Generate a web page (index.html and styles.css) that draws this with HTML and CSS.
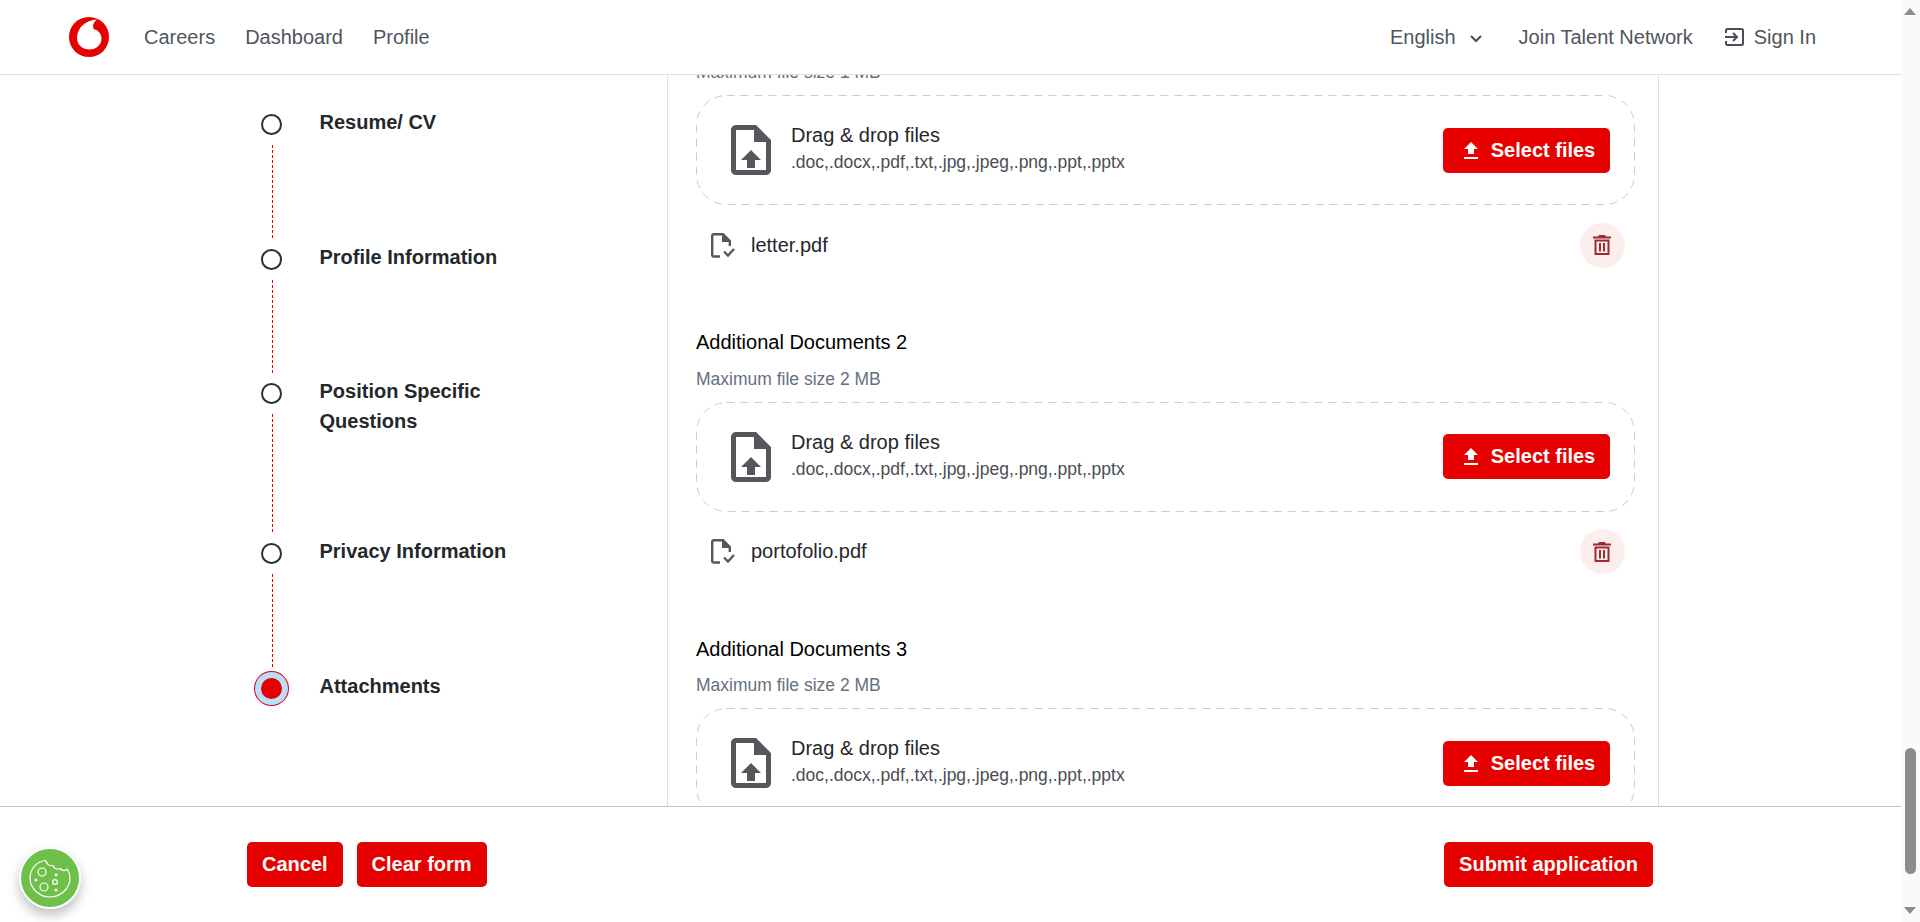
FILE: index.html
```html
<!DOCTYPE html>
<html>

<head>
    <title>Careers - Application</title>
    <link rel="stylesheet" href="styles.css">
</head>

<body>
    <div class="window">
        <div class="page">
            <header class="topbar">
                <svg class="logo" viewBox="0 0 40 40">
                    <circle cx="20" cy="20" r="20" fill="#e60000" />
                    <path fill="#fff" d="M28 2.6C16.5 3.2 8 11 8 21C8 27.8 13.5 32.5 20.5 32.5C27.3 32.5 32.5 27.8 32.5 21.5C32.5 16.5 29 13 25 12.3C23 9.5 24.5 5 28 2.6Z" />
                </svg>
                <nav class="nav">
                    <a href="#">Careers</a>
                    <a href="#">Dashboard</a>
                    <a href="#">Profile</a>
                </nav>
                <div class="nav nav-right">
                    <a href="#" class="lang">English
                        <svg class="chevron" viewBox="0 0 14 9">
                            <path d="M2 2l5 5 5-5" fill="none" stroke="#4a4d55" stroke-width="2" />
                        </svg>
                    </a>
                    <a href="#">Join Talent Network</a>
                    <a href="#" class="signin">
                        <svg class="signin-icon" viewBox="0 0 20 18">
                            <path d="M2 5V2.5C2 1.7 2.7 1 3.5 1H17.5C18.3 1 19 1.7 19 2.5V15.5C19 16.3 18.3 17 17.5 17H3.5C2.7 17 2 16.3 2 15.5V13" fill="none" stroke="#4a4d55" stroke-width="2" />
                            <path d="M1 9H13M9 5l4 4-4 4" fill="none" stroke="#4a4d55" stroke-width="2" />
                        </svg>
                        Sign In
                    </a>
                </div>
            </header>

            <main class="content">
                <ol class="stepper">
                    <li class="step">
                        <div class="track"><span class="dot"></span><span class="line"></span></div>
                        <div class="step-label">Resume/ CV</div>
                    </li>
                    <li class="step">
                        <div class="track"><span class="dot"></span><span class="line"></span></div>
                        <div class="step-label">Profile Information</div>
                    </li>
                    <li class="step step-tall">
                        <div class="track"><span class="dot"></span><span class="line"></span></div>
                        <div class="step-label">Position Specific<br>Questions</div>
                    </li>
                    <li class="step">
                        <div class="track"><span class="dot"></span><span class="line"></span></div>
                        <div class="step-label">Privacy Information</div>
                    </li>
                    <li class="step step-last">
                        <div class="track"><span class="dot dot-active"></span></div>
                        <div class="step-label">Attachments</div>
                    </li>
                </ol>

                <form class="form">
                    <section class="doc doc-first">
                        <div class="hint">Maximum file size 1 MB</div>
                        <div class="dropzone">
                            <svg class="dash" viewBox="0 0 939 110">
                                <rect x="0.5" y="0.5" width="938" height="109" rx="30" fill="none" stroke="#c9ccd4" stroke-dasharray="8 6" />
                            </svg>
                            <svg class="file-up" viewBox="0 0 40 50">
                                <path fill="#54575c" fill-rule="evenodd" d="M5 0H25L40 15V45C40 47.8 37.8 50 35 50H5C2.2 50 0 47.8 0 45V5C0 2.2 2.2 0 5 0ZM5 5V45H35V17H23V5Z" />
                                <path fill="#54575c" d="M20 25L30 35H24V43H16V35H10Z" />
                            </svg>
                            <div class="drop-text">
                                <div class="drop-title">Drag &amp; drop files</div>
                                <div class="drop-types">.doc,.docx,.pdf,.txt,.jpg,.jpeg,.png,.ppt,.pptx</div>
                            </div>
                            <button type="button" class="btn btn-select">
                                <svg class="up-icon" viewBox="0 0 16 17">
                                    <path fill="#fff" d="M8 0L15 7H11V12H5V7H1ZM1 15H15V17H1Z" />
                                </svg>
                                Select files
                            </button>
                        </div>
                        <div class="file-row">
                            <svg class="file-check" viewBox="0 0 24 25">
                                <path fill="none" stroke="#54575c" stroke-width="2.4" d="M9 23.5H3C2 23.5 1.2 22.7 1.2 21.7V3C1.2 2 2 1.2 3 1.2H12L18.8 8V13" />
                                <path fill="#54575c" d="M11 1L19 9H11Z" />
                                <path fill="none" stroke="#54575c" stroke-width="2.4" d="M13 18.5l4 4 6-6.5" />
                            </svg>
                            <span class="file-name">letter.pdf</span>
                            <button type="button" class="trash">
                                <svg viewBox="0 0 18 20" class="trash-icon">
                                    <path fill="#9c2b33" fill-rule="evenodd" d="M6 0H12L13 1.5H18V3.5H0V1.5H5ZM1.5 4.5H16.5V20H1.5ZM3.5 6.5V18H14.5V6.5Z" />
                                    <path fill="#9c2b33" d="M6 8H8V16.5H6ZM10 8H12V16.5H10Z" />
                                </svg>
                            </button>
                        </div>
                    </section>

                    <section class="doc">
                        <div class="doc-title">Additional Documents 2</div>
                        <div class="hint">Maximum file size 2 MB</div>
                        <div class="dropzone">
                            <svg class="dash" viewBox="0 0 939 110">
                                <rect x="0.5" y="0.5" width="938" height="109" rx="30" fill="none" stroke="#c9ccd4" stroke-dasharray="8 6" />
                            </svg>
                            <svg class="file-up" viewBox="0 0 40 50">
                                <path fill="#54575c" fill-rule="evenodd" d="M5 0H25L40 15V45C40 47.8 37.8 50 35 50H5C2.2 50 0 47.8 0 45V5C0 2.2 2.2 0 5 0ZM5 5V45H35V17H23V5Z" />
                                <path fill="#54575c" d="M20 25L30 35H24V43H16V35H10Z" />
                            </svg>
                            <div class="drop-text">
                                <div class="drop-title">Drag &amp; drop files</div>
                                <div class="drop-types">.doc,.docx,.pdf,.txt,.jpg,.jpeg,.png,.ppt,.pptx</div>
                            </div>
                            <button type="button" class="btn btn-select">
                                <svg class="up-icon" viewBox="0 0 16 17">
                                    <path fill="#fff" d="M8 0L15 7H11V12H5V7H1ZM1 15H15V17H1Z" />
                                </svg>
                                Select files
                            </button>
                        </div>
                        <div class="file-row">
                            <svg class="file-check" viewBox="0 0 24 25">
                                <path fill="none" stroke="#54575c" stroke-width="2.4" d="M9 23.5H3C2 23.5 1.2 22.7 1.2 21.7V3C1.2 2 2 1.2 3 1.2H12L18.8 8V13" />
                                <path fill="#54575c" d="M11 1L19 9H11Z" />
                                <path fill="none" stroke="#54575c" stroke-width="2.4" d="M13 18.5l4 4 6-6.5" />
                            </svg>
                            <span class="file-name">portofolio.pdf</span>
                            <button type="button" class="trash">
                                <svg viewBox="0 0 18 20" class="trash-icon">
                                    <path fill="#9c2b33" fill-rule="evenodd" d="M6 0H12L13 1.5H18V3.5H0V1.5H5ZM1.5 4.5H16.5V20H1.5ZM3.5 6.5V18H14.5V6.5Z" />
                                    <path fill="#9c2b33" d="M6 8H8V16.5H6ZM10 8H12V16.5H10Z" />
                                </svg>
                            </button>
                        </div>
                    </section>

                    <section class="doc">
                        <div class="doc-title">Additional Documents 3</div>
                        <div class="hint">Maximum file size 2 MB</div>
                        <div class="dropzone">
                            <svg class="dash" viewBox="0 0 939 110">
                                <rect x="0.5" y="0.5" width="938" height="109" rx="30" fill="none" stroke="#c9ccd4" stroke-dasharray="8 6" />
                            </svg>
                            <svg class="file-up" viewBox="0 0 40 50">
                                <path fill="#54575c" fill-rule="evenodd" d="M5 0H25L40 15V45C40 47.8 37.8 50 35 50H5C2.2 50 0 47.8 0 45V5C0 2.2 2.2 0 5 0ZM5 5V45H35V17H23V5Z" />
                                <path fill="#54575c" d="M20 25L30 35H24V43H16V35H10Z" />
                            </svg>
                            <div class="drop-text">
                                <div class="drop-title">Drag &amp; drop files</div>
                                <div class="drop-types">.doc,.docx,.pdf,.txt,.jpg,.jpeg,.png,.ppt,.pptx</div>
                            </div>
                            <button type="button" class="btn btn-select">
                                <svg class="up-icon" viewBox="0 0 16 17">
                                    <path fill="#fff" d="M8 0L15 7H11V12H5V7H1ZM1 15H15V17H1Z" />
                                </svg>
                                Select files
                            </button>
                        </div>
                    </section>
                </form>
            </main>

            <footer class="actions">
                <button type="button" class="btn">Cancel</button>
                <button type="button" class="btn">Clear form</button>
                <button type="button" class="btn btn-submit">Submit application</button>
            </footer>

            <button type="button" class="cookie">
                <svg viewBox="0 0 42 40" class="cookie-icon">
                    <path fill="none" stroke="#fff" stroke-width="1.2" d="M16.7 2.5C17.5 6 20.5 8.5 24 7.5C25 10.5 28 12 31 10.5C33 12.5 36 13 38.3 11.3C40 14 41 17 41 20C41 30 32 39 21 39C10 39 1 30 1 20C1 10.5 8 3.5 16.7 2.5Z" />
                    <circle cx="13" cy="14" r="4" fill="none" stroke="#fff" stroke-width="1.2" />
                    <circle cx="15" cy="29" r="4" fill="none" stroke="#fff" stroke-width="1.2" />
                    <circle cx="26" cy="24" r="2.4" fill="none" stroke="#fff" stroke-width="1.2" />
                    <circle cx="7" cy="22" r="1.6" fill="#fff" />
                    <circle cx="27" cy="17" r="1.4" fill="#fff" />
                    <circle cx="27" cy="32" r="1.6" fill="#fff" />
                </svg>
            </button>
        </div>

        <div class="scrollbar">
            <span class="arrow-up"></span>
            <span class="thumb"></span>
            <span class="arrow-down"></span>
        </div>
    </div>
</body>

</html>
```
FILE: styles.css
```css
/* Page frame */
html,
body {
    margin: 0;
    padding: 0;
    height: 100%;
    overflow: hidden;
}

body {
    font-family: "Liberation Sans", Arial, sans-serif;
    background: #ffffff;
    color: #25282b;
}

a {
    color: inherit;
    text-decoration: none;
}

.window {
    display: flex;
    height: 922px;
}

.page {
    flex: 1;
    display: flex;
    flex-direction: column;
    min-width: 0;
    position: relative;
}

/* Header styles */
.topbar {
    flex: none;
    height: 74px;
    display: flex;
    align-items: center;
    padding: 0 85px 0 69px;
    border-bottom: 1px solid #dcdfe3;
    font-size: 20px;
    color: #50555e;
}

.logo {
    width: 40px;
    height: 40px;
    margin-right: 35px;
}

.nav {
    display: flex;
    align-items: center;
    gap: 30px;
}

.nav-right {
    margin-left: auto;
    gap: 31px;
}

.lang {
    display: flex;
    align-items: center;
    gap: 13px;
    margin-right: 5px;
}

.chevron {
    width: 14px;
    height: 9px;
    margin-top: 2px;
}

.signin {
    display: flex;
    align-items: center;
    gap: 10px;
}

.signin-icon {
    width: 20px;
    height: 18px;
}

/* Stepper and form columns */
.content {
    flex: 1;
    min-height: 0;
    display: flex;
    padding-left: 247px;
    overflow: hidden;
}

.stepper {
    flex: none;
    width: 420px;
    box-sizing: border-box;
    margin: 0;
    padding: 39px 0 0 14px;
    list-style: none;
}

.step {
    display: flex;
    gap: 37.5px;
    height: 134.5px;
}

.step-tall {
    height: 160px;
}

.track {
    width: 21px;
    display: flex;
    flex-direction: column;
    align-items: center;
}

.dot {
    flex: none;
    box-sizing: border-box;
    width: 21px;
    height: 21px;
    border: 2px solid #2b2e33;
    border-radius: 50%;
}

.dot-active {
    border: none;
    background: #e60000;
    box-shadow: 0 0 0 6px #bbdefb, 0 0 0 7px #e60000;
}

.line {
    flex: 1;
    align-self: flex-start;
    width: 1px;
    margin: 10px 0 9px 11px;
    background: repeating-linear-gradient(#e60000 0 3px, transparent 3px 5px);
}

.step-label {
    margin-top: -7px;
    font-size: 20px;
    font-weight: 700;
    line-height: 30px;
    color: #25282b;
}

.form {
    flex: none;
    width: 992px;
    box-sizing: border-box;
    padding: 0 23px 0 28px;
    border-left: 1px solid #dcdfe3;
    border-right: 1px solid #dcdfe3;
}

/* One document upload */
.doc {
    margin-bottom: 62px;
}

.doc-first {
    margin-top: -16px;
}

.doc-title {
    height: 24px;
    padding-top: 0.5px;
    margin-bottom: 11.5px;
    font-size: 20px;
    line-height: 24px;
    color: #000000;
}

.hint {
    height: 24px;
    padding-top: 1px;
    margin-bottom: 11px;
    font-size: 17.5px;
    line-height: 24px;
    color: #667080;
}

.dropzone {
    box-sizing: border-box;
    height: 110px;
    position: relative;
    display: flex;
    align-items: center;
    padding: 0 25px 0 35px;
}

.dash {
    position: absolute;
    left: 0;
    top: 0;
    width: 100%;
    height: 110px;
}

.file-up {
    width: 40px;
    height: 50px;
    margin-right: 20px;
}

.drop-text {
    flex: 1;
    padding-bottom: 4px;
}

.drop-title {
    font-size: 20px;
    line-height: 26px;
    color: #25282b;
}

.drop-types {
    margin-top: 2px;
    font-size: 17.5px;
    line-height: 24px;
    color: #4a4d55;
}

.btn {
    height: 45px;
    padding: 0 15px;
    border: none;
    border-radius: 5px;
    background: #e60000;
    color: #ffffff;
    font-family: "Liberation Sans", Arial, sans-serif;
    font-size: 20px;
    font-weight: 700;
    cursor: pointer;
}

.btn-select {
    width: 167px;
    display: flex;
    align-items: center;
    justify-content: center;
    gap: 12px;
    padding: 0 0 0 5px;
}

.up-icon {
    width: 16px;
    height: 17px;
}

.file-row {
    height: 45px;
    margin-top: 17.5px;
    display: flex;
    align-items: center;
    padding: 0 10.5px 0 15px;
}

.file-check {
    width: 24px;
    height: 25px;
    margin-right: 16px;
}

.file-name {
    flex: 1;
    font-size: 20px;
    color: #25282b;
}

.trash {
    width: 45px;
    height: 45px;
    padding: 0;
    display: flex;
    align-items: center;
    justify-content: center;
    border: none;
    border-radius: 50%;
    background: #fdeeee;
}

.trash-icon {
    width: 18px;
    height: 20px;
}

/* Bottom action bar */
.actions {
    flex: none;
    height: 116px;
    box-sizing: border-box;
    display: flex;
    gap: 14px;
    padding: 35px 248px 0 247px;
    border-top: 1px solid #c0c8d2;
}

.btn-submit {
    margin-left: auto;
}

.cookie {
    position: absolute;
    left: 19px;
    top: 847px;
    width: 62px;
    height: 62px;
    padding: 0;
    display: flex;
    align-items: center;
    justify-content: center;
    border: 2px solid #ffffff;
    border-radius: 50%;
    background: #6fc04a;
    box-shadow: 0 6px 12px rgba(0, 0, 0, 0.25);
}

.cookie-icon {
    width: 42px;
    height: 40px;
}

/* Fake browser scrollbar */
.scrollbar {
    flex: none;
    width: 19px;
    position: relative;
    background: #fafafa;
}

.thumb {
    position: absolute;
    left: 4px;
    top: 748px;
    width: 11px;
    height: 126px;
    border-radius: 6px;
    background: #8c8c8c;
}

.arrow-up,
.arrow-down {
    position: absolute;
    left: 3px;
    width: 0;
    height: 0;
    border-left: 6.5px solid transparent;
    border-right: 6.5px solid transparent;
}

.arrow-up {
    top: 8px;
    border-bottom: 7px solid #8c8c8c;
}

.arrow-down {
    top: 907px;
    border-top: 7px solid #8c8c8c;
}
```
